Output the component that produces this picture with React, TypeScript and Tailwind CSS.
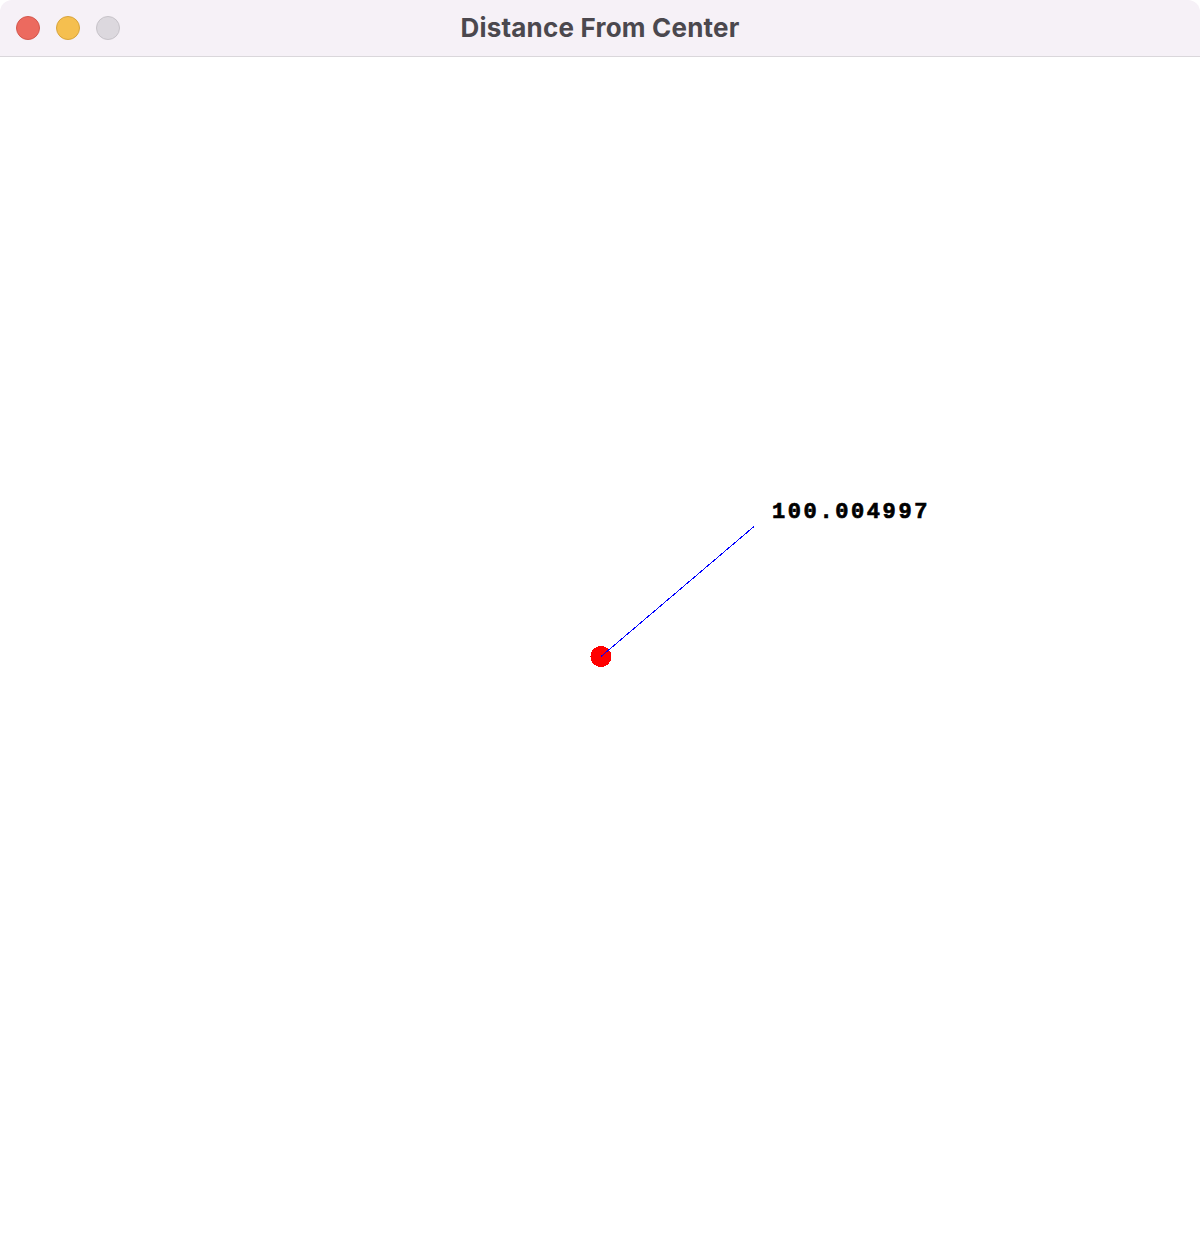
export default function App() {
  return (
    <div className="w-[1200px] h-[1256px] bg-white flex flex-col overflow-hidden">
      <div className="relative h-[57px] shrink-0 bg-[#f6f1f7] border-b border-[#dad7db] rounded-t-[12px] flex items-center justify-center">
        <div className="absolute left-[16px] top-[16px] flex gap-[16px]">
          <div className="w-[24px] h-[24px] rounded-full bg-[#ec6a5f] border border-[#d4574d]" />
          <div className="w-[24px] h-[24px] rounded-full bg-[#f5bf4f] border border-[#d8a43c]" />
          <div className="w-[24px] h-[24px] rounded-full bg-[#dcd8de] border border-[#c7c3c9]" />
        </div>
        <span className="-mt-[2px] text-[26px] font-bold text-[#4b484e] tracking-[0.2px]" style={{ fontFamily: "Inter, 'Noto Sans', sans-serif" }}>
          Distance From Center
        </span>
      </div>
      <div className="relative flex-1">
        <svg className="absolute left-0 top-0" width="1200" height="1199" shapeRendering="crispEdges">
          <circle cx="601" cy="599.5" r="10.5" fill="#ff0000" />
          <line x1="601" y1="599.5" x2="754" y2="469.5" stroke="#0000ff" strokeWidth="1" />
        </svg>
        <span
          className="absolute left-[772px] top-[445px] text-[22px] font-bold text-black leading-none tracking-[2.6px] [-webkit-text-stroke:0.7px_black]"
          style={{ fontFamily: "'Liberation Mono', monospace" }}
        >
          100.004997
        </span>
      </div>
    </div>
  );
}
